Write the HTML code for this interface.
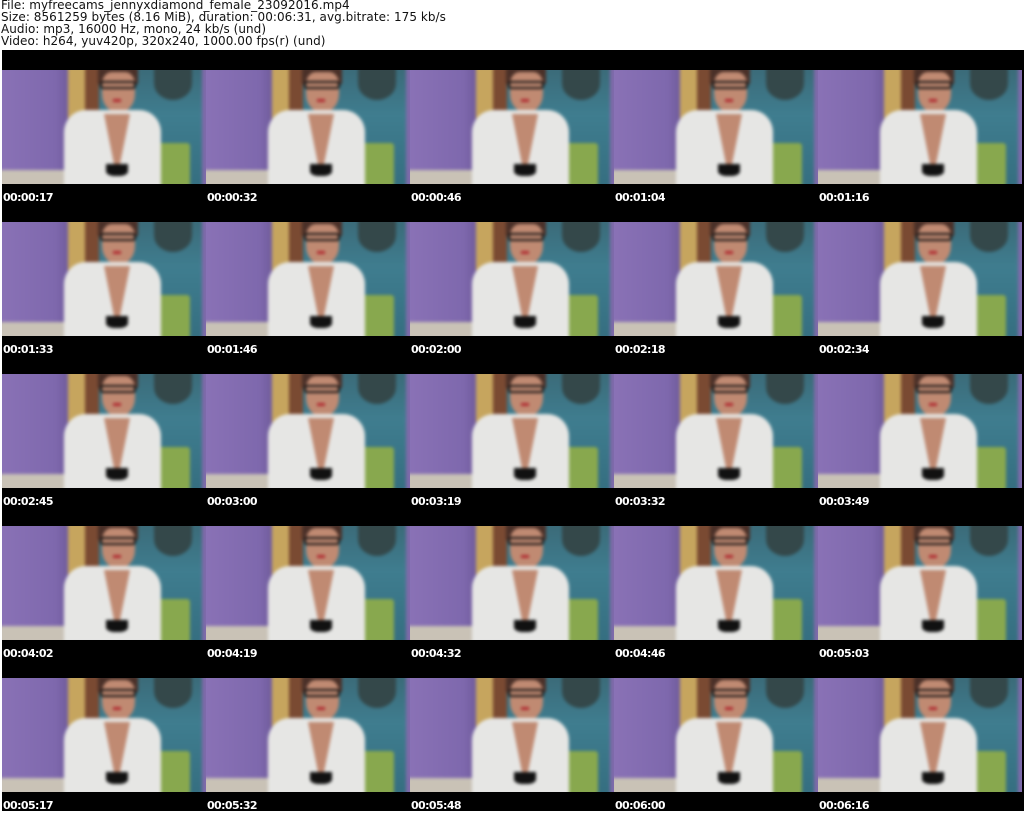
<!DOCTYPE html>
<html><head><meta charset="utf-8"><style>
*{margin:0;padding:0;box-sizing:border-box}
body{width:1024px;height:811px;background:#fff;position:relative;overflow:hidden;font-family:"DejaVu Sans","Liberation Sans",sans-serif}
.hdr{position:absolute;left:1px;top:-1px;font-size:12px;line-height:12px;color:#111;white-space:pre;letter-spacing:0.05px}
.sheet{position:absolute;left:2px;top:50px;width:1022px;height:761px;background:#000}
.tile{position:absolute;width:204px;height:152px}
.img{position:absolute;left:0;top:20px;width:204px;height:114px;overflow:hidden;background:#3d7283}
.inner{position:absolute;left:-3px;top:-3px;width:210px;height:120px;filter:blur(1.5px)}
.inner>div{position:absolute;left:3px;top:3px;width:204px;height:114px}
.inner>div div{position:absolute}
.ts{position:absolute;left:1px;top:141px;font-size:11px;font-weight:bold;color:#fff;line-height:14px;letter-spacing:-0.6px}
</style></head><body>
<div class="hdr">File: myfreecams_jennyxdiamond_female_23092016.mp4
Size: 8561259 bytes (8.16 MiB), duration: 00:06:31, avg.bitrate: 175 kb/s
Audio: mp3, 16000 Hz, mono, 24 kb/s (und)
Video: h264, yuv420p, 320x240, 1000.00 fps(r) (und)</div>
<div class="sheet" id="s"></div>
<script>
var t=["00:00:17","00:00:32","00:00:46","00:01:04","00:01:16","00:01:33","00:01:46","00:02:00","00:02:18","00:02:34","00:02:45","00:03:00","00:03:19","00:03:32","00:03:49","00:04:02","00:04:19","00:04:32","00:04:46","00:05:03","00:05:17","00:05:32","00:05:48","00:06:00","00:06:16"];
var img='<div class="img"><div class="inner" style="background:#3d7283"><div>'+
'<div style="left:95px;top:-3px;width:112px;height:120px;background:linear-gradient(#3b6a78,#3f7d8f 40%,#356e80)"></div>'+
'<div style="left:152px;top:-3px;width:38px;height:33px;background:#34484a;border-radius:0 0 50% 50%"></div>'+
'<div style="left:-3px;top:-3px;width:71px;height:108px;background:linear-gradient(90deg,#8a72b6,#7e68ad 80%,#6e5a9a)"></div>'+
'<div style="left:66px;top:-3px;width:17px;height:53px;background:#c6a55e"></div>'+
'<div style="left:83px;top:-3px;width:14px;height:48px;background:#7a4a32"></div>'+
'<div style="left:-3px;top:100px;width:73px;height:17px;background:#c9c2b6"></div>'+
'<div style="left:155px;top:73px;width:33px;height:44px;background:#88a84e;border-radius:3px"></div>'+
'<div style="left:96px;top:-3px;width:40px;height:17px;background:#4a3028"></div>'+
'<div style="left:100px;top:2px;width:33px;height:40px;background:#c08a72;border-radius:30% 30% 45% 45%"></div>'+
'<div style="left:98px;top:11px;width:36px;height:8px;border:2px solid #111;border-radius:3px"></div>'+
'<div style="left:111px;top:29px;width:8px;height:3px;background:#b02a30"></div>'+
'<div style="left:62px;top:40px;width:97px;height:77px;background:#e6e6e4;border-radius:22px 22px 0 0"></div>'+
'<div style="left:102px;top:44px;width:26px;height:52px;background:#c08a72;clip-path:polygon(0 0,100% 0,60% 100%,40% 100%)"></div>'+
'<div style="left:104px;top:94px;width:22px;height:12px;background:#111;border-radius:0 0 40% 40%"></div>'+
'<div style="left:200px;top:-3px;width:7px;height:120px;background:#7f6aaa"></div>'+
'</div></div></div>';
var h='';
for(var i=0;i<25;i++){var c=i%5,r=Math.floor(i/5);
h+='<div class="tile" style="left:'+(c*204)+'px;top:'+(r*152)+'px">'+img+'<div class="ts">'+t[i]+'</div></div>';}
document.getElementById('s').innerHTML=h;
</script>
</body></html>
